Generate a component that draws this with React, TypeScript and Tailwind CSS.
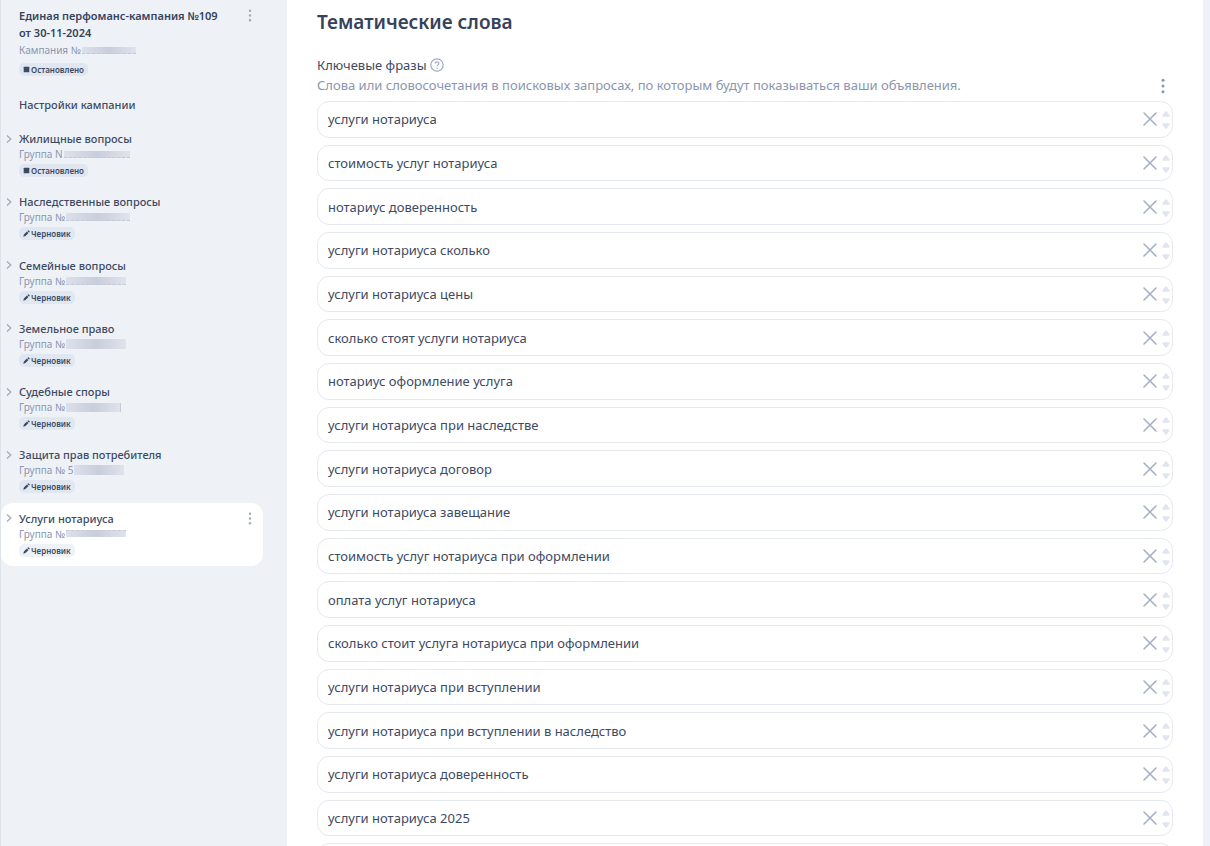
import { useState } from "react";

type Status = "stopped" | "draft";

type Group = {
  name: string;
  status: Status;
  prefix: string;
  mask: string;
};

const groups: Group[] = [
  { name: "Жилищные вопросы", status: "stopped", prefix: "Группа N", mask: "w-[66px] h-[7px] border-b border-dashed" },
  { name: "Наследственные вопросы", status: "draft", prefix: "Группа №", mask: "w-[64px] h-2 border-b border-dashed" },
  { name: "Семейные вопросы", status: "draft", prefix: "Группа №", mask: "w-[60px] h-2 border-b border-dashed" },
  { name: "Земельное право", status: "draft", prefix: "Группа №", mask: "w-[60px] h-[10px]" },
  { name: "Судебные споры", status: "draft", prefix: "Группа №", mask: "w-[55px] h-[9px] border-r" },
  { name: "Защита прав потребителя", status: "draft", prefix: "Группа № 5", mask: "w-[50px] h-[10px]" },
  { name: "Услуги нотариуса", status: "draft", prefix: "Группа №", mask: "w-[60px] h-[7px] border-t border-dashed" },
];

const initialPhrases = [
  "услуги нотариуса",
  "стоимость услуг нотариуса",
  "нотариус доверенность",
  "услуги нотариуса сколько",
  "услуги нотариуса цены",
  "сколько стоят услуги нотариуса",
  "нотариус оформление услуга",
  "услуги нотариуса при наследстве",
  "услуги нотариуса договор",
  "услуги нотариуса завещание",
  "стоимость услуг нотариуса при оформлении",
  "оплата услуг нотариуса",
  "сколько стоит услуга нотариуса при оформлении",
  "услуги нотариуса при вступлении",
  "услуги нотариуса при вступлении в наследство",
  "услуги нотариуса доверенность",
  "услуги нотариуса 2025",
  "",
];

function Dots({ className = "" }: { className?: string }) {
  return (
    <svg viewBox="0 0 4 16" className={className} fill="currentColor" aria-hidden="true">
      <circle cx="2" cy="2.2" r="1.5" />
      <circle cx="2" cy="8" r="1.5" />
      <circle cx="2" cy="13.8" r="1.5" />
    </svg>
  );
}

function StatusBadge({ status, active = false }: { status: Status; active?: boolean }) {
  return (
    <span
      className={`flex h-[13px] w-fit items-center gap-px rounded-[5px] px-1 text-[8px] leading-[13px] font-semibold text-[#3d4a63] ${
        active ? "bg-[#eef2f7]" : "bg-[#e0e7f1]"
      }`}
    >
      {status === "stopped" ? (
        <svg viewBox="0 0 7 7" className="size-[7px]" aria-hidden="true">
          <rect x="0.7" y="0.7" width="5.6" height="5.6" rx="0.6" fill="currentColor" />
        </svg>
      ) : (
        <svg viewBox="0 0 7 7" className="size-[7px]" fill="currentColor" aria-hidden="true">
          <path d="M0.3 6.7 0.9 4.5 3.9 1.5 5.5 3.1 2.5 6.1ZM4.4 1 5 .4Q5.4 0 5.8.4L6.6 1.2Q7 1.6 6.6 2L6 2.6Z" />
        </svg>
      )}
      {status === "stopped" ? "Остановлено" : "Черновик"}
    </span>
  );
}

function Masked({ prefix, mask }: { prefix: string; mask: string }) {
  return (
    <p className="flex h-[14px] items-center gap-px text-[10px] leading-[14px] whitespace-pre text-[#8a96b0]">
      {prefix}
      <span className={`border-[#c3cad8] bg-gradient-to-r from-[#dce0ea] via-[#c8cedb] to-[#dfe3ec] ${mask}`} />
    </p>
  );
}

export default function App() {
  const [phrases, setPhrases] = useState(initialPhrases);
  const [selected, setSelected] = useState("Услуги нотариуса");

  const update = (index: number, value: string) =>
    setPhrases(phrases.map((p, i) => (i === index ? value : p)));

  const move = (index: number, step: number) => {
    const target = index + step;
    if (target < 0 || target >= phrases.length) return;
    const next = [...phrases];
    [next[index], next[target]] = [next[target], next[index]];
    setPhrases(next);
  };

  return (
    <div className="flex h-screen overflow-hidden bg-[#eef2f7] pr-[7px] font-['Noto_Sans',sans-serif] text-[#3d4a63]">
      <aside className="w-[287px] shrink-0 border-l border-[#dfe4ec] pt-[7px] pr-6">
        <div className="flex items-start justify-between pr-[11px] pl-[18px]">
          <div>
            <h2 className="text-[11px] leading-[17px] font-semibold text-[#35425b]">
              Единая перфоманс-кампания №109
              <br />
              от 30-11-2024
            </h2>
            <div className="mt-[2px] mb-[6px]">
              <Masked prefix="Кампания №" mask="w-[54px] h-[7px] border-b border-dashed" />
            </div>
            <StatusBadge status="stopped" />
          </div>
          <button aria-label="Меню кампании" className="mt-[2px] text-[#a0aac0]">
            <Dots className="h-[13px] w-1" />
          </button>
        </div>

        <a href="#settings" className="mt-5 ml-[18px] block text-[11px] leading-[17px] font-medium">
          Настройки кампании
        </a>

        <ul className="mt-[10px] grid h-[443px] auto-rows-fr">
          {groups.map((group) => {
            const active = group.name === selected;
            return (
              <li
                key={group.name}
                className={`flex items-start pt-[7px] pr-[11px] pl-[5px] ${active ? "rounded-xl bg-white" : ""}`}
              >
                <button aria-label="Развернуть группу" className="flex h-[17px] w-[13px] items-center text-[#a0aac0]">
                  <svg viewBox="0 0 6 8" className="h-2 w-[6px]" fill="none" stroke="currentColor" strokeWidth="1.3" aria-hidden="true">
                    <path d="M1 .5 4.8 4 1 7.5" />
                  </svg>
                </button>
                <div className="grow">
                  <button
                    onClick={() => setSelected(group.name)}
                    className="block text-[11px] leading-[17px] font-medium"
                  >
                    {group.name}
                  </button>
                  <Masked prefix={group.prefix} mask={group.mask} />
                  <div className="mt-[3px]">
                    <StatusBadge status={group.status} active={active} />
                  </div>
                </div>
                {active && (
                  <button aria-label="Меню группы" className="mt-[2px] text-[#a0aac0]">
                    <Dots className="h-[13px] w-1" />
                  </button>
                )}
              </li>
            );
          })}
        </ul>
      </aside>

      <main className="min-w-0 grow bg-white px-[30px] pt-2">
        <h1 className="text-[19px] leading-7 font-semibold text-[#35425b]">Тематические слова</h1>

        <div className="mt-[19px] flex items-end justify-between">
          <div>
            <div className="flex items-center gap-[3px] text-[13px] leading-5">
              Ключевые фразы
              <button aria-label="Подсказка" className="text-[#a0aac0]">
                <svg viewBox="0 0 14 14" className="size-[14px]" fill="none" stroke="currentColor" strokeWidth="1.2" aria-hidden="true">
                  <circle cx="7" cy="7" r="6.2" />
                  <path d="M5.2 5.6c0-2.3 3.7-2.2 3.7 0 0 1.3-1.8 1.3-1.8 2.7M7.1 9.4v1.3" />
                </svg>
              </button>
            </div>
            <p className="text-[13px] leading-5 text-[#8a96b0]">
              Слова или словосочетания в поисковых запросах, по которым будут показываться ваши объявления.
            </p>
          </div>
          <button aria-label="Действия с фразами" className="mr-2 mb-px text-[#8a96b0]">
            <Dots className="h-4 w-1" />
          </button>
        </div>

        <ul className="mt-[6px] grid h-[779px] auto-rows-fr gap-[7px]">
          {phrases.map((phrase, index) => (
            <li key={index} className="flex min-h-0 items-center rounded-xl border border-[#e6e8f2] pr-[2px] pl-[10px]">
              <input
                type="text"
                aria-label={`Ключевая фраза ${index + 1}`}
                value={phrase}
                onChange={(e) => update(index, e.target.value)}
                className="min-w-0 grow bg-transparent text-[13px] leading-5 outline-none"
              />
              <button
                aria-label="Удалить фразу"
                onClick={() => setPhrases(phrases.filter((_, i) => i !== index))}
                className="mr-[5px] text-[#a6b0c5]"
              >
                <svg viewBox="0 0 14 14" className="size-[14px]" stroke="currentColor" strokeWidth="1.6" strokeLinecap="round" aria-hidden="true">
                  <path d="M1 1 13 13M13 1 1 13" />
                </svg>
              </button>
              <div className="flex flex-col gap-[6px] pt-[2px] text-[#e2e5f0]">
                <button aria-label="Переместить выше" onClick={() => move(index, -1)}>
                  <svg viewBox="0 0 8 6" className="h-[6px] w-2" fill="currentColor" aria-hidden="true">
                    <path d="M3.2.6Q4-.2 4.8.6L7.4 4Q8 5.6 6.8 5.8H1.2Q0 5.6.6 4Z" />
                  </svg>
                </button>
                <button aria-label="Переместить ниже" onClick={() => move(index, 1)}>
                  <svg viewBox="0 0 8 6" className="h-[6px] w-2" fill="currentColor" aria-hidden="true">
                    <path d="M3.2 5.4Q4 6.2 4.8 5.4L7.4 2Q8 .4 6.8.2H1.2Q0 .4.6 2Z" />
                  </svg>
                </button>
              </div>
            </li>
          ))}
        </ul>
      </main>
    </div>
  );
}
